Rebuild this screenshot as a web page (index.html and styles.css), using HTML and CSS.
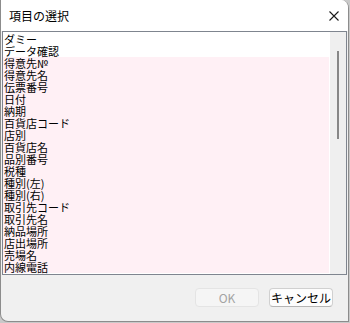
FILE: index.html
```html
<!DOCTYPE html>
<html lang="ja">
<head>
<meta charset="utf-8">
<title>項目の選択</title>
<link rel="stylesheet" href="styles.css">
</head>
<body>
<div class="window">
  <div class="titlebar">
    <span class="title">項目の選択</span>
    <span class="close" aria-label="閉じる">
      <svg width="10" height="10" viewBox="0 0 10 10"><path d="M0.5 0.5 L9.5 9.5 M9.5 0.5 L0.5 9.5" stroke="#1a1a1a" stroke-width="1.1" fill="none"/></svg>
    </span>
  </div>
  <div class="listbox">
    <ul class="items">
      <li class="item">ダミー</li>
      <li class="item">データ確認</li>
      <li class="item pink">得意先№</li>
      <li class="item pink">得意先名</li>
      <li class="item pink">伝票番号</li>
      <li class="item pink">日付</li>
      <li class="item pink">納期</li>
      <li class="item pink">百貨店コード</li>
      <li class="item pink">店別</li>
      <li class="item pink">百貨店名</li>
      <li class="item pink">品別番号</li>
      <li class="item pink">税種</li>
      <li class="item pink">種別(左)</li>
      <li class="item pink">種別(右)</li>
      <li class="item pink">取引先コード</li>
      <li class="item pink">取引先名</li>
      <li class="item pink">納品場所</li>
      <li class="item pink">店出場所</li>
      <li class="item pink">売場名</li>
      <li class="item pink">内線電話</li>
    </ul>
    <div class="scrollbar"><div class="thumb"></div></div>
  </div>
  <div class="buttons">
    <button class="btn disabled" disabled>OK</button>
    <button class="btn">キャンセル</button>
  </div>
</div>
</body>
</html>
```
FILE: styles.css
```css
html, body {
  margin: 0;
  padding: 0;
}
body {
  background: #c9c9c9;
  width: 350px;
  height: 323px;
  overflow: hidden;
  font-family: "Noto Sans CJK JP", "Noto Sans", sans-serif;
}
.window {
  box-sizing: border-box;
  width: 349px;
  height: 322px;
  background: #f0f0f0;
  border: 1px solid #8c8c8c;
  border-top: none;
  border-radius: 0 8px 0 8px;
  display: flex;
  flex-direction: column;
  overflow: hidden;
}
.titlebar {
  height: 31px;
  background: #ffffff;
  display: flex;
  align-items: center;
  justify-content: space-between;
  padding: 0 8px 0 8px;
  flex: none;
}
.title {
  font-size: 12px;
  line-height: 14px;
  color: #000;
  margin-top: 1px;
}
.close {
  display: flex;
  width: 10px;
  height: 10px;
  margin-right: 1px;
}
.listbox {
  box-sizing: border-box;
  height: 244px;
  margin: 0 1px 0 1px;
  border: 1px solid #7f858f;
  background: #ffffff;
  display: flex;
  flex: none;
}
.items {
  list-style: none;
  margin: 0;
  padding: 1px 0 0 0;
  width: 326px;
  flex: none;
  overflow: hidden;
}
.item {
  height: 12px;
  line-height: 12px;
  font-size: 11px;
  padding-left: 1px;
  color: #000;
  white-space: nowrap;
}
.item.pink {
  background: #fff0f5;
}
.scrollbar {
  flex: 1;
  background: #efefef;
  margin-left: 1px;
  padding: 19px 0 0 7px;
}
.thumb {
  width: 2px;
  height: 88px;
  background: #878787;
}
.buttons {
  display: flex;
  justify-content: flex-end;
  gap: 10px;
  padding: 13px 15px 0 0;
}
.btn {
  box-sizing: border-box;
  width: 64px;
  height: 19px;
  padding: 0;
  font-family: "Noto Sans CJK JP", "Noto Sans", sans-serif;
  font-size: 12px;
  line-height: 12px;
  color: #000;
  background: #fdfdfd;
  border: 1px solid #d0d0d0;
  border-bottom-color: #b5b5b5;
  border-radius: 4px;
}
.btn.disabled {
  color: #a3a3a3;
  background: #f5f5f5;
  border-color: #e4e4e4;
}
```
